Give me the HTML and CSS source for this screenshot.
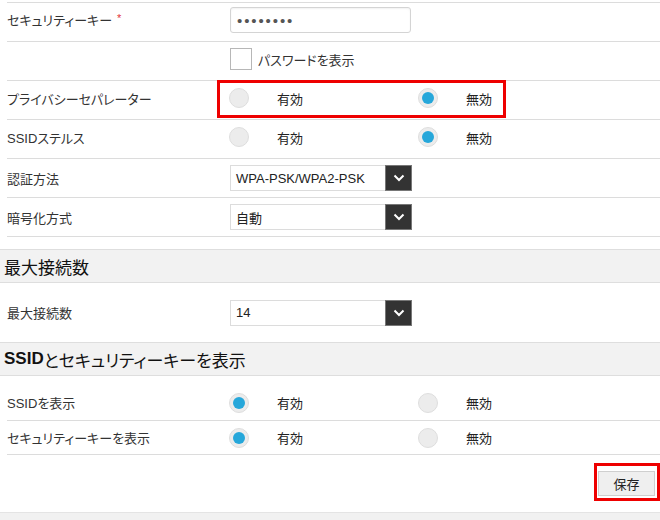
FILE: index.html
```html
<!DOCTYPE html>
<html lang="ja">
<head>
<meta charset="utf-8">
<title>Wi-Fi設定</title>
<link rel="stylesheet" href="styles.css">
</head>
<body>
<div class="page">
  <div class="rows first">
    <div class="row lift top">
      <div class="label">セキュリティーキー<span class="req">*</span></div>
      <div class="field"><div class="textbox"><span class="dots">••••••••</span></div></div>
    </div>
    <div class="row lift">
      <div class="label"></div>
      <div class="field check"><span class="checkbox"></span><span>パスワードを表示</span></div>
    </div>
    <div class="row lift">
      <div class="label">プライバシーセパレーター</div>
      <div class="field radios">
        <span class="opt"><span class="radio"></span><span>有効</span></span>
        <span class="opt"><span class="radio on"></span><span>無効</span></span>
      </div>
      <div class="mark mark-privacy"></div>
    </div>
    <div class="row lift">
      <div class="label">SSIDステルス</div>
      <div class="field radios">
        <span class="opt"><span class="radio"></span><span>有効</span></span>
        <span class="opt"><span class="radio on"></span><span>無効</span></span>
      </div>
    </div>
    <div class="row">
      <div class="label">認証方法</div>
      <div class="field"><div class="select"><span class="value">WPA-PSK/WPA2-PSK</span><span class="arrow"><svg width="12" height="8" viewBox="0 0 12 8"><path d="M1.5 1.5 L6 6 L10.5 1.5" fill="none" stroke="#fff" stroke-width="2"/></svg></span></div></div>
    </div>
    <div class="row">
      <div class="label">暗号化方式</div>
      <div class="field"><div class="select"><span class="value">自動</span><span class="arrow"><svg width="12" height="8" viewBox="0 0 12 8"><path d="M1.5 1.5 L6 6 L10.5 1.5" fill="none" stroke="#fff" stroke-width="2"/></svg></span></div></div>
    </div>
  </div>

  <div class="section-head">最大接続数</div>
  <div class="rows">
    <div class="row plain tall">
      <div class="label">最大接続数</div>
      <div class="field"><div class="select"><span class="value">14</span><span class="arrow"><svg width="12" height="8" viewBox="0 0 12 8"><path d="M1.5 1.5 L6 6 L10.5 1.5" fill="none" stroke="#fff" stroke-width="2"/></svg></span></div></div>
    </div>
  </div>

  <div class="section-head"><b>SSID</b>とセキュリティーキーを表示</div>
  <div class="rows">
    <div class="row top-pad">
      <div class="label">SSIDを表示</div>
      <div class="field radios">
        <span class="opt"><span class="radio on"></span><span>有効</span></span>
        <span class="opt"><span class="radio"></span><span>無効</span></span>
      </div>
    </div>
    <div class="row short">
      <div class="label">セキュリティーキーを表示</div>
      <div class="field radios">
        <span class="opt"><span class="radio on"></span><span>有効</span></span>
        <span class="opt"><span class="radio"></span><span>無効</span></span>
      </div>
    </div>
  </div>
  <div class="actions">
    <button class="save" type="button">保存</button>
    <div class="mark mark-save"></div>
  </div>
  <div class="footer"></div>
</div>
</body>
</html>
```

FILE: styles.css
```css
html, body {
  margin: 0;
  padding: 0;
  background: #fff;
}
body {
  font-family: "Liberation Sans", "Noto Sans CJK JP", sans-serif;
  font-size: 13px;
  color: #333;
  font-feature-settings: "palt";
  width: 660px;
  height: 520px;
  overflow: hidden;
}
.page {
  display: flex;
  flex-direction: column;
  height: 520px;
}
.rows {
  margin-left: 7px;
}
.rows.first {
  margin-top: 2px;
  border-top: 1px solid #dcdcdc;
  margin-bottom: 12px;
}
.row {
  position: relative;
  display: flex;
  align-items: center;
  height: 38px;
  border-bottom: 1px solid #dcdcdc;
  box-sizing: content-box;
}
.row.lift {
  height: 34px;
  padding-bottom: 4px;
}
.row.lift.top {
  height: 33px;
  padding-bottom: 5px;
}
.row.plain {
  border-bottom: none;
}
.row.tall {
  height: 59px;
}
.row.top-pad {
  height: 35px;
  padding-top: 9px;
}
.row.short {
  height: 33px;
}
.label {
  width: 223px;
  flex: none;
  white-space: nowrap;
}
.req {
  color: #e2333b;
  font-size: 11px;
  margin-left: 5px;
  vertical-align: 3px;
}
.field {
  display: flex;
  align-items: center;
}
.textbox {
  height: 24px;
  border: 1px solid #d4d4d4;
  border-radius: 3px;
  box-shadow: inset 0 1px 2px rgba(0,0,0,0.06);
  display: flex;
  align-items: center;
  padding-left: 6px;
  box-sizing: content-box;
  width: 173px;
}
.dots {
  font-size: 15px;
  letter-spacing: 1.9px;
  color: #555;
  line-height: 1;
  padding-top: 1px;
}
.check {
  gap: 6px;
}
.checkbox {
  width: 20px;
  height: 20px;
  border: 1px solid #b7b7b7;
  background: #fff;
  display: block;
}
.radios {
  display: grid;
  grid-template-columns: 189px auto;
  margin-left: -1px;
}
.opt {
  display: flex;
  align-items: center;
  gap: 28px;
  font-size: 13px;
  color: #222;
}
.radio {
  width: 18px;
  height: 18px;
  border-radius: 50%;
  background: #ececec;
  border: 1px solid #dedede;
  display: flex;
  align-items: center;
  justify-content: center;
  flex: none;
}
.radio.on::after {
  content: "";
  width: 12px;
  height: 12px;
  border-radius: 50%;
  background: #26a7da;
}
.select {
  display: flex;
  width: 182px;
  height: 26px;
  border: 1px solid #dcdcdc;
  box-sizing: border-box;
}
.select .value {
  flex: 1;
  padding-left: 5px;
  display: flex;
  align-items: center;
  color: #222;
}
.select .arrow {
  width: 25px;
  margin: -1px -1px -1px 0;
  background: #333;
  border: 1px solid #777;
  display: flex;
  align-items: center;
  justify-content: center;
}
.section-head {
  height: 32px;
  background: #f2f2f2;
  border-top: 1px solid #dedede;
  border-bottom: 1px solid #dedede;
  display: flex;
  align-items: center;
  padding-left: 4px;
  font-size: 17px;
  color: #111;
}
.section-head b {
  font-weight: bold;
}
.actions {
  position: relative;
  height: 57px;
  display: flex;
  align-items: center;
  justify-content: flex-end;
  padding-right: 5px;
}
.save {
  width: 57px;
  height: 25px;
  background: #efefef;
  border: 1px solid #cfcfcf;
  font-family: inherit;
  font-size: 13px;
  font-feature-settings: "palt";
  color: #222;
  padding: 0;
}
.footer {
  flex: 1;
  background: #f1f1f1;
  border-top: 1px solid #e4e4e4;
}
.mark {
  position: absolute;
  border: 3px solid #ee0000;
  box-sizing: border-box;
  pointer-events: none;
}
.mark-privacy {
  left: 210px;
  top: -1px;
  width: 289px;
  height: 38px;
}
.mark-save {
  left: 594px;
  top: 8px;
  width: 66px;
  height: 38px;
}
```
